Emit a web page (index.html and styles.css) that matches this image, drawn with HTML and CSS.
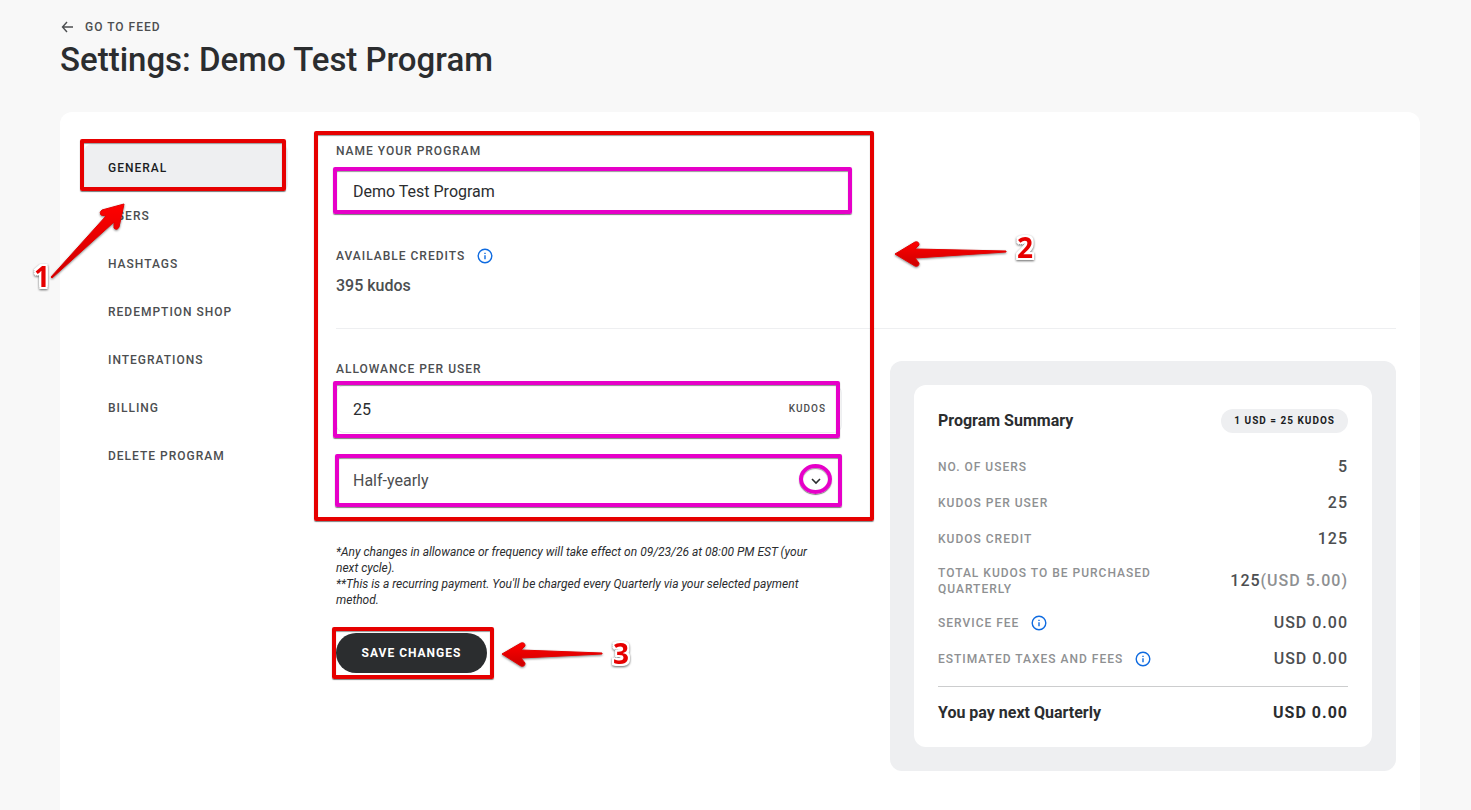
FILE: index.html
```html
<!DOCTYPE html>
<html lang="en">
<head>
  <meta charset="UTF-8">
  <meta name="viewport" content="width=device-width, initial-scale=1.0">
  <title>Settings: Demo Test Program</title>
  <link rel="stylesheet" href="styles.css">
</head>
<body>
  <header class="page-header">
    <a class="back-link" href="#">
      <svg width="14" height="12" viewBox="0 0 14 12"><path d="M6 1L1.5 6L6 11M1.5 6H12" /></svg>
      GO TO FEED
    </a>
    <h1>Settings: Demo Test Program</h1>
  </header>

  <main class="card">
    <nav class="sidebar">
      <a class="active" href="#">GENERAL</a>
      <a href="#">USERS</a>
      <a href="#">HASHTAGS</a>
      <a href="#">REDEMPTION SHOP</a>
      <a href="#">INTEGRATIONS</a>
      <a href="#">BILLING</a>
      <a href="#">DELETE PROGRAM</a>
      <!-- step 1 -->
      <span class="mark mark-general"></span>
      <svg class="arrow arrow-1" width="80" height="80" viewBox="0 0 80 80">
        <path d="M76 3L54 9Q51 11 53 14L58 15L3 76L4 77L66 21L66 27Q69 30 71 26Z" />
      </svg>
      <span class="step step-1">1</span>
    </nav>

    <div class="content">
      <section class="program">
        <label class="label" for="name">NAME YOUR PROGRAM</label>
        <div class="name-field">
          <input type="text" id="name" value="Demo Test Program">
          <span class="mark mark-pink mark-name"></span>
        </div>
        <div class="label credits-label">
          AVAILABLE CREDITS
          <svg class="info" width="16" height="16" viewBox="0 0 16 16"><circle cx="8" cy="8" r="6.8" /><path d="M8 7.2V11.2M8 4.8V6" /></svg>
        </div>
        <p class="credits">395 kudos</p>
      </section>

      <div class="columns">
        <form class="allowance">
          <label class="label" for="allowance">ALLOWANCE PER USER</label>
          <div class="amount-field">
            <input type="text" id="allowance" value="25">
            <span class="unit">KUDOS</span>
            <span class="mark mark-pink mark-amount"></span>
          </div>
          <div class="select-field">
            <select aria-label="Frequency">
              <option>Half-yearly</option>
              <option>Quarterly</option>
            </select>
            <svg class="chevron" width="12" height="8" viewBox="0 0 12 8"><path d="M2 2L6 6L10 2" /></svg>
            <span class="mark mark-pink mark-select"></span>
            <span class="mark mark-pink mark-chevron"></span>
          </div>
          <p class="note">*Any changes in allowance or frequency will take effect on 09/23/26 at 08:00 PM EST (your next cycle).<br>**This is a recurring payment. You'll be charged every Quarterly via your selected payment method.</p>
          <div class="save">
            <button type="button">SAVE CHANGES</button>
            <!-- step 3 -->
            <span class="mark mark-save"></span>
            <svg class="arrow arrow-3" width="104" height="28" viewBox="0 0 104 28">
              <path d="M2 14L21 3Q25 2 25 6L21 10L102 13V14L21 18L25 23Q25 27 21 26Z" />
            </svg>
            <span class="step step-3">3</span>
          </div>
        </form>

        <aside class="summary">
          <div class="summary-card">
            <div class="summary-head">
              <h2>Program Summary</h2>
              <span class="rate">1 USD = 25 KUDOS</span>
            </div>
            <dl>
              <div class="row"><dt>NO. OF USERS</dt><dd>5</dd></div>
              <div class="row"><dt>KUDOS PER USER</dt><dd>25</dd></div>
              <div class="row"><dt>KUDOS CREDIT</dt><dd>125</dd></div>
              <div class="row tall"><dt>TOTAL KUDOS TO BE PURCHASED QUARTERLY</dt><dd>125<span>(USD 5.00)</span></dd></div>
              <div class="row">
                <dt>SERVICE FEE <svg class="info" width="16" height="16" viewBox="0 0 16 16"><circle cx="8" cy="8" r="6.8" /><path d="M8 7.2V11.2M8 4.8V6" /></svg></dt>
                <dd>USD 0.00</dd>
              </div>
              <div class="row">
                <dt>ESTIMATED TAXES AND FEES <svg class="info" width="16" height="16" viewBox="0 0 16 16"><circle cx="8" cy="8" r="6.8" /><path d="M8 7.2V11.2M8 4.8V6" /></svg></dt>
                <dd>USD 0.00</dd>
              </div>
              <div class="row total"><dt>You pay next Quarterly</dt><dd>USD 0.00</dd></div>
            </dl>
          </div>
        </aside>
      </div>

      <!-- step 2 -->
      <span class="mark mark-form"></span>
      <svg class="arrow arrow-2" width="116" height="28" viewBox="0 0 116 28">
        <path d="M3 15L23 3Q27 2 27 6L23 10L114 12V13L23 19L27 24Q27 28 23 27Z" />
      </svg>
      <span class="step step-2">2</span>
    </div>
  </main>

  <!-- fill shared by the arrows -->
  <svg class="defs" width="0" height="0">
    <linearGradient id="red" x1="0" y1="0" x2="0" y2="1">
      <stop offset="0" stop-color="#ff0000" />
      <stop offset="1" stop-color="#cc0000" />
    </linearGradient>
  </svg>
</body>
</html>
```
FILE: styles.css
```css
* { box-sizing: border-box; }
body { display: flex; flex-direction: column; min-height: 100vh; margin: 0; padding: 16px 51px 0 60px; background: #f8f8f8; color: #2b2d2f; font-family: Roboto, "Open Sans", sans-serif; font-size: 16px; line-height: 24px; }
h1, h2, p, dl, dd { margin: 0; }
a { color: inherit; text-decoration: none; }
svg path, svg circle { fill: none; stroke: currentColor; }

.page-header { height: 96px; }
.back-link { display: inline-flex; align-items: center; gap: 10px; color: #4c4e50; font-size: 12px; font-weight: 500; line-height: 16px; letter-spacing: 1px; }
.back-link svg { margin-left: 1px; }
.back-link path { stroke-width: 1.4; }
h1 { font-size: 33px; font-weight: 500; line-height: 40px; }

.card { flex: 1; display: flex; gap: 48px; padding: 31px 24px 39px; background: white; border-radius: 12px 12px 0 0; }
.sidebar { position: relative; flex: 0 0 204px; margin-top: 1px; }
.sidebar a { display: block; padding: 16px 24px; border-radius: 8px; color: #4c4e50; font-size: 12px; font-weight: 500; line-height: 16px; letter-spacing: 1px; }
.sidebar a.active { background: #eeeff1; color: #1b1d1f; }

.content { position: relative; flex: 1; min-width: 0; }
.label { display: block; color: #4c4e50; font-size: 12px; font-weight: 500; line-height: 16px; letter-spacing: 1px; }
input, select { display: block; width: 100%; height: 48px; padding: 0 16px; border: 1px solid #eeeff1; border-radius: 8px; background: white; color: #2b2d2f; font: inherit; letter-spacing: inherit; appearance: none; }
select { color: #4c4e50; }

.program { padding-bottom: 30px; border-bottom: 1px solid #eeeff1; }
.name-field { position: relative; width: 514px; max-width: 100%; margin-top: 8px; }
.credits-label { display: flex; align-items: center; gap: 12px; margin-top: 33px; }
.info { flex: none; color: #0f6be0; }
.info circle, .info path { stroke-width: 1.4; }
.credits { margin-top: 10px; color: #4c4e50; font-weight: 500; }

.columns { display: grid; grid-template-columns: 1fr 1fr; gap: 48px; align-items: start; margin-top: 32px; }
.amount-field, .select-field { position: relative; margin-top: 8px; }
.select-field { margin-top: 24px; }
.unit { position: absolute; right: 16px; top: 16px; color: #4c4e50; font-size: 10px; font-weight: 500; line-height: 16px; letter-spacing: 1px; }
.chevron { position: absolute; right: 20px; top: 20px; }
.chevron path { stroke-width: 1.6; }
.note { margin-top: 39px; padding-right: 12px; font-size: 12px; font-style: italic; line-height: 16px; }
.save { position: relative; margin-top: 25px; }
button { width: 151px; height: 40px; border: none; border-radius: 20px; background: #2b2d2f; color: white; font: inherit; font-size: 12px; font-weight: 700; letter-spacing: 1px; cursor: pointer; }

.summary { padding: 24px; background: #eeeff1; border-radius: 12px; }
.summary-card { padding: 24px 24px 22px; background: white; border-radius: 12px; }
.summary-head { display: flex; justify-content: space-between; align-items: center; margin-bottom: 22px; }
h2 { font-size: 16px; font-weight: 700; line-height: 24px; }
.rate { padding: 4px 13px; border-radius: 12px; background: #eeeff1; color: #1b1d1f; font-size: 10px; font-weight: 700; line-height: 16px; letter-spacing: 1px; }
.row { display: flex; justify-content: space-between; align-items: center; margin-bottom: 12px; }
.row.tall { min-height: 36px; }
dt { display: flex; align-items: center; gap: 12px; max-width: 240px; color: #8e9092; font-size: 12px; font-weight: 500; line-height: 16px; letter-spacing: 1px; }
dd { color: #4c4e50; font-weight: 500; letter-spacing: 1px; }
dd span { color: #8e9092; }
.row.total { margin: 15px 0 0; padding-top: 14px; border-top: 1px solid #cccdce; }
.total dt, .total dd { color: #2b2d2f; font-size: 16px; font-weight: 700; }
.total dt { letter-spacing: 0; }

/* walkthrough marks */
.mark { position: absolute; border: 4px solid #e60000; border-radius: 2px; box-shadow: 0 1px 1px rgba(0, 0, 0, 0.5), inset 0 1px 1px rgba(0, 0, 0, 0.4); pointer-events: none; }
.mark-pink { border-color: #e600c8; }
.mark-general { left: -4px; right: 2px; top: -5px; height: 52px; }
.mark-form { left: -22px; top: -12px; width: 560px; height: 390px; }
.mark-name { inset: 0 -2px 1px -3px; }
.mark-amount { inset: -4px 2px -5px -3px; }
.mark-select { inset: -3px 0 -2px -1px; }
.mark-chevron { right: 10px; top: 7px; width: 33px; height: 30px; border-radius: 50%; }
.mark-save { left: -4px; top: -6px; width: 162px; height: 52px; }
.arrow { position: absolute; filter: drop-shadow(0 1px 1px rgba(0, 0, 0, 0.5)); pointer-events: none; }
.arrow path { fill: url(#red); stroke: #e60000; stroke-linejoin: round; }
.arrow-1 { left: -36px; top: 57px; }
.arrow-2 { left: 556px; top: 96px; }
.arrow-3 { left: 164px; top: 7px; }
.step { position: absolute; color: #e60000; font: 700 28px/32px "Open Sans", sans-serif; text-shadow: 2px 0 white, -2px 0 white, 0 2px white, 0 -2px white, 2px 2px white, -2px 2px white, 2px -2px white, -2px -2px white; filter: drop-shadow(0 1px 1px rgba(0, 0, 0, 0.6)); }
.step-1 { left: -50px; top: 116px; }
.step-2 { left: 681px; top: 88px; }
.step-3 { left: 277px; top: 4px; }
.defs { position: absolute; }
```
